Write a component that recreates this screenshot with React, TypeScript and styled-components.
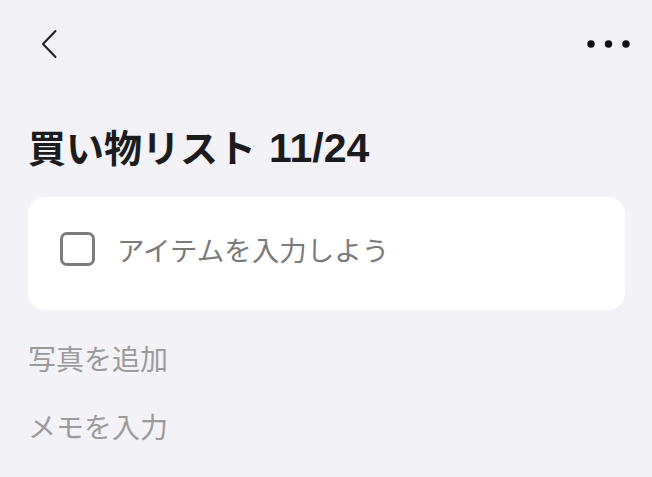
import React from 'react';
import styled, { createGlobalStyle } from 'styled-components';

const GlobalStyle = createGlobalStyle`
  html, body {
    margin: 0;
    padding: 0;
    background: #f2f2f7;
  }
  body {
    font-family: "Liberation Sans", "Noto Sans CJK JP", sans-serif;
  }
`;

const Page = styled.div`
  width: 652px;
  height: 477px;
  box-sizing: border-box;
  padding: 0 27px 0 28px;
  background: #f2f2f7;
  overflow: hidden;
`;

const Header = styled.div`
  height: 88px;
  display: flex;
  align-items: center;
  justify-content: space-between;
`;

const IconButton = styled.button<{ $left?: number; $right?: number }>`
  border: none;
  background: none;
  padding: 0;
  margin-left: ${(p) => p.$left ?? 0}px;
  margin-right: ${(p) => p.$right ?? 0}px;
  display: flex;
  align-items: center;
  color: #1c1c1e;
  cursor: pointer;
`;

const Title = styled.h1`
  margin: 38px 0 0;
  height: 44px;
  font-size: 38px;
  line-height: 44px;
  font-weight: 700;
  color: #1c1c1e;
  display: flex;
  align-items: baseline;
  gap: 13px;
`;

const Count = styled.span`
  font-family: "Liberation Sans", sans-serif;
  font-size: 41px;
  line-height: 44px;
`;

const Card = styled.div`
  margin-top: 27px;
  height: 113px;
  box-sizing: border-box;
  background: #ffffff;
  border-radius: 17px;
  display: flex;
  align-items: center;
  gap: 22px;
  padding: 0 32px 9px;
`;

const Checkbox = styled.span`
  width: 35px;
  height: 34px;
  box-sizing: border-box;
  border: 3px solid #7b7b7b;
  border-radius: 7px;
  flex-shrink: 0;
`;

const Placeholder = styled.span`
  font-family: "Noto Sans CJK JP", sans-serif;
  font-size: 27.5px;
  line-height: 40px;
  color: #7a7a7a;
`;

const Action = styled.div<{ $top: number }>`
  margin-top: ${(p) => p.$top}px;
  font-family: "Noto Sans CJK JP", sans-serif;
  font-size: 28px;
  line-height: 40px;
  color: #9b9b9b;
`;

const App: React.FC = () => (
  <Page>
    <GlobalStyle />
    <Header>
      <IconButton $left={12}>
        <svg width="18" height="30" viewBox="0 0 18 30">
          <path d="M15.5 2 L3 15 L15.5 28" fill="none" stroke="#1c1c1e" strokeWidth="2" strokeLinecap="round" strokeLinejoin="round" />
        </svg>
      </IconButton>
      <IconButton $right={-6}>
        <svg width="44" height="10" viewBox="0 0 44 10">
          <circle cx="4" cy="5" r="3.7" fill="#111" />
          <circle cx="21.5" cy="5" r="3.7" fill="#111" />
          <circle cx="39" cy="5" r="3.7" fill="#111" />
        </svg>
      </IconButton>
    </Header>
    <Title>
      買い物リスト<Count>11/24</Count>
    </Title>
    <Card>
      <Checkbox />
      <Placeholder>アイテムを入力しよう</Placeholder>
    </Card>
    <Action $top={28}>写真を追加</Action>
    <Action $top={28}>メモを入力</Action>
  </Page>
);

export default App;
